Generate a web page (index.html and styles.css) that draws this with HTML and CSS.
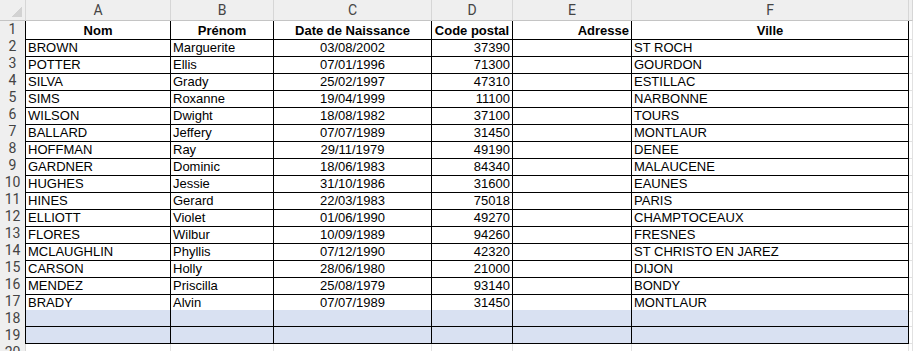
FILE: index.html
```html
<!DOCTYPE html>
<html lang="fr">
  <head>
    <meta charset="utf-8" />
    <title>Feuil1</title>
    <link rel="stylesheet" href="styles.css">
  </head>
  <body>
    <div class="sheet">
      <div class="row head">
        <div class="corner"></div>
        <div class="col">A</div>
        <div class="col">B</div>
        <div class="col">C</div>
        <div class="col">D</div>
        <div class="col">E</div>
        <div class="col">F</div>
        <div class="col"></div>
      </div>
      <div class="row">
        <div class="rh">1</div>
        <div class="c b ctr">Nom</div>
        <div class="c b ctr">Prénom</div>
        <div class="c b ctr">Date de Naissance</div>
        <div class="c b ctr">Code postal</div>
        <div class="c b rt">Adresse</div>
        <div class="c b ctr">Ville</div>
        <div class="g"></div>
      </div>
      <div class="row">
        <div class="rh">2</div>
        <div class="c">BROWN</div>
        <div class="c">Marguerite</div>
        <div class="c ctr">03/08/2002</div>
        <div class="c rt">37390</div>
        <div class="c"></div>
        <div class="c">ST ROCH</div>
        <div class="g"></div>
      </div>
      <div class="row">
        <div class="rh">3</div>
        <div class="c">POTTER</div>
        <div class="c">Ellis</div>
        <div class="c ctr">07/01/1996</div>
        <div class="c rt">71300</div>
        <div class="c"></div>
        <div class="c">GOURDON</div>
        <div class="g"></div>
      </div>
      <div class="row">
        <div class="rh">4</div>
        <div class="c">SILVA</div>
        <div class="c">Grady</div>
        <div class="c ctr">25/02/1997</div>
        <div class="c rt">47310</div>
        <div class="c"></div>
        <div class="c">ESTILLAC</div>
        <div class="g"></div>
      </div>
      <div class="row">
        <div class="rh">5</div>
        <div class="c">SIMS</div>
        <div class="c">Roxanne</div>
        <div class="c ctr">19/04/1999</div>
        <div class="c rt">11100</div>
        <div class="c"></div>
        <div class="c">NARBONNE</div>
        <div class="g"></div>
      </div>
      <div class="row">
        <div class="rh">6</div>
        <div class="c">WILSON</div>
        <div class="c">Dwight</div>
        <div class="c ctr">18/08/1982</div>
        <div class="c rt">37100</div>
        <div class="c"></div>
        <div class="c">TOURS</div>
        <div class="g"></div>
      </div>
      <div class="row">
        <div class="rh">7</div>
        <div class="c">BALLARD</div>
        <div class="c">Jeffery</div>
        <div class="c ctr">07/07/1989</div>
        <div class="c rt">31450</div>
        <div class="c"></div>
        <div class="c">MONTLAUR</div>
        <div class="g"></div>
      </div>
      <div class="row">
        <div class="rh">8</div>
        <div class="c">HOFFMAN</div>
        <div class="c">Ray</div>
        <div class="c ctr">29/11/1979</div>
        <div class="c rt">49190</div>
        <div class="c"></div>
        <div class="c">DENEE</div>
        <div class="g"></div>
      </div>
      <div class="row">
        <div class="rh">9</div>
        <div class="c">GARDNER</div>
        <div class="c">Dominic</div>
        <div class="c ctr">18/06/1983</div>
        <div class="c rt">84340</div>
        <div class="c"></div>
        <div class="c">MALAUCENE</div>
        <div class="g"></div>
      </div>
      <div class="row">
        <div class="rh">10</div>
        <div class="c">HUGHES</div>
        <div class="c">Jessie</div>
        <div class="c ctr">31/10/1986</div>
        <div class="c rt">31600</div>
        <div class="c"></div>
        <div class="c">EAUNES</div>
        <div class="g"></div>
      </div>
      <div class="row">
        <div class="rh">11</div>
        <div class="c">HINES</div>
        <div class="c">Gerard</div>
        <div class="c ctr">22/03/1983</div>
        <div class="c rt">75018</div>
        <div class="c"></div>
        <div class="c">PARIS</div>
        <div class="g"></div>
      </div>
      <div class="row">
        <div class="rh">12</div>
        <div class="c">ELLIOTT</div>
        <div class="c">Violet</div>
        <div class="c ctr">01/06/1990</div>
        <div class="c rt">49270</div>
        <div class="c"></div>
        <div class="c">CHAMPTOCEAUX</div>
        <div class="g"></div>
      </div>
      <div class="row">
        <div class="rh">13</div>
        <div class="c">FLORES</div>
        <div class="c">Wilbur</div>
        <div class="c ctr">10/09/1989</div>
        <div class="c rt">94260</div>
        <div class="c"></div>
        <div class="c">FRESNES</div>
        <div class="g"></div>
      </div>
      <div class="row">
        <div class="rh">14</div>
        <div class="c">MCLAUGHLIN</div>
        <div class="c">Phyllis</div>
        <div class="c ctr">07/12/1990</div>
        <div class="c rt">42320</div>
        <div class="c"></div>
        <div class="c">ST CHRISTO EN JAREZ</div>
        <div class="g"></div>
      </div>
      <div class="row">
        <div class="rh">15</div>
        <div class="c">CARSON</div>
        <div class="c">Holly</div>
        <div class="c ctr">28/06/1980</div>
        <div class="c rt">21000</div>
        <div class="c"></div>
        <div class="c">DIJON</div>
        <div class="g"></div>
      </div>
      <div class="row">
        <div class="rh">16</div>
        <div class="c">MENDEZ</div>
        <div class="c">Priscilla</div>
        <div class="c ctr">25/08/1979</div>
        <div class="c rt">93140</div>
        <div class="c"></div>
        <div class="c">BONDY</div>
        <div class="g"></div>
      </div>
      <div class="row">
        <div class="rh">17</div>
        <div class="c">BRADY</div>
        <div class="c">Alvin</div>
        <div class="c ctr">07/07/1989</div>
        <div class="c rt">31450</div>
        <div class="c"></div>
        <div class="c">MONTLAUR</div>
        <div class="g"></div>
      </div>
      <div class="row fill">
        <div class="rh">18</div>
        <div class="c"></div>
        <div class="c"></div>
        <div class="c"></div>
        <div class="c"></div>
        <div class="c"></div>
        <div class="c"></div>
        <div class="g"></div>
      </div>
      <div class="row fill">
        <div class="rh">19</div>
        <div class="c"></div>
        <div class="c"></div>
        <div class="c"></div>
        <div class="c"></div>
        <div class="c"></div>
        <div class="c"></div>
        <div class="g"></div>
      </div>
      <div class="row empty">
        <div class="rh">20</div>
        <div class="g"></div>
        <div class="g"></div>
        <div class="g"></div>
        <div class="g"></div>
        <div class="g"></div>
        <div class="g"></div>
        <div class="g"></div>
      </div>
    </div>
  </body>
</html>
```

FILE: styles.css
```css
* {
  margin: 0;
  padding: 0;
  box-sizing: border-box;
}
body {
  background: #fff;
  overflow: hidden;
  width: 913px;
  height: 351px;
}
.sheet {
  display: flex;
  flex-direction: column;
}
.row {
  display: grid;
  grid-template-columns: 26px 145px 103px 158px 81px 119px 277px 4px;
  height: 17px;
}
.head {
  height: 21px;
  background: #efefef;
}
.corner {
  border-right: 1px solid #d6d6d6;
  border-bottom: 1px solid #c4c4c4;
  background: linear-gradient(135deg, transparent 50%, #d2d2d2 50%) right 3px bottom 3px / 10px 10px no-repeat;
}
.col {
  border-right: 1px solid #d6d6d6;
  border-bottom: 1px solid #c4c4c4;
  padding-top: 1px;
  text-align: center;
  font: 14px/19px Roboto, "Noto Sans", sans-serif;
  color: #444;
}
.rh {
  background: #efefef;
  border-right: 1px solid #000;
  text-align: center;
  font: 14px/17px Roboto, "Noto Sans", sans-serif;
  color: #444;
}
.c {
  border-right: 1px solid #000;
  border-bottom: 1px solid #000;
  padding: 1px 2px 0 2px;
  font: 13px/17px "Liberation Sans", Arial, sans-serif;
  color: #000;
  white-space: nowrap;
}
.g {
  border-right: 1px solid #e1e1e1;
  border-bottom: 1px solid #e1e1e1;
}
.b {
  font-weight: bold;
}
.ctr {
  text-align: center;
}
.rt {
  text-align: right;
}
.fill .c {
  background: #d9e1f2;
}
.empty .rh {
  border-right: 1px solid #d6d6d6;
}
```
